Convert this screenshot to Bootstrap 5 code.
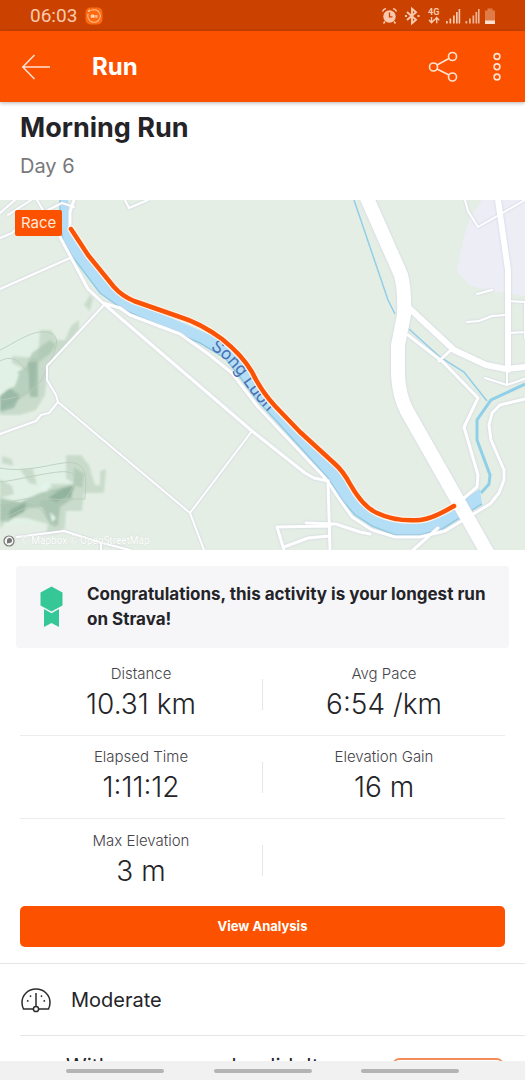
<!DOCTYPE html>
<html lang="en">
<head>
<meta charset="utf-8">
<meta name="viewport" content="width=device-width, initial-scale=1">
<title>Run</title>
<link href="https://cdn.jsdelivr.net/npm/bootstrap@5.3.0/dist/css/bootstrap.min.css" rel="stylesheet">
<script src="https://cdn.jsdelivr.net/npm/bootstrap@5.3.0/dist/js/bootstrap.bundle.min.js" defer></script>
<style>
  body { font-family: Inter, "Liberation Sans", sans-serif; color: #242428; background: #fff; }
  .status-strip { height: 31px; background: #cb4200; color: #f8c9ae; font: 19px/31px Roboto, sans-serif; padding: 0 28px 0 30px; }
  .app-bar { height: 71px; background: #fc5200; color: #fff; padding: 0 18px 0 20px; box-shadow: 0 1px 4px rgba(0,0,0,.3); position: relative; z-index: 1; }
  .app-bar h1 { font-size: 24px; line-height: 32px; margin-left: 40px; }
  .icon-btn { background: none; border: 0; padding: 0; color: #ffe3d3; line-height: 0; }
  .heading-block { padding: 8px 20px 16px; height: 98px; }
  .run-title { font-size: 27px; line-height: 36px; }
  .run-day { font-size: 20px; line-height: 28px; color: #77777c; margin-top: 6px; }
  .map-box svg { display: block; width: 100%; height: auto; }
  .race-tag { top: 10px; left: 15px; background: #fc5200; color: #ffe9dd; font-size: 15px; line-height: 26px; padding: 0 6px; border-radius: 2px; }
  .award { margin: 16px 16px 5px; padding: 16px 12px 16px 24px; background: #f6f6f9; border-radius: 3px; gap: 24px; font-size: 17px; line-height: 25px; font-weight: 700; }
  .award svg { flex: none; }
  .stats { padding: 0 20px; }
  .stat-row { height: 83px; border-bottom: 1px solid #ececef; }
  .stat-row:last-child { border-bottom: 0; }
  .stat-cell { flex: 1 1 0; text-align: center; }
  .stat-rule { width: 1px; height: 31px; background: #e6e6ea; }
  .stat-label { font-size: 15px; line-height: 20px; font-weight: 300; color: #44444a; }
  .stat-value { font-size: 28px; line-height: 40px; font-weight: 300; }
  .btn-run { background: #fc5200; color: #fff; height: 41px; font-size: 13px; font-weight: 700; border-radius: 5px; padding: 0; }
  .btn-run:hover { background: #e34a00; color: #fff; }
  .effort { height: 72px; border-top: 1px solid #e6e6ea; padding: 0 21px; gap: 20px; font-size: 20px; }
  .join-row { margin-left: 20px; padding: 16px 22px 16px 46px; border-top: 1px solid #e6e6ea; font-size: 21px; line-height: 30px; gap: 16px; }
  .btn-join { width: 110px; height: 40px; flex: none; margin-top: 6px; border: 2px solid #f58a5a; border-radius: 6px; color: #fc5200; font-size: 14px; font-weight: 600; padding: 0; }
  .nav-strip { height: 19px; background: #f1f1f1; padding: 0 66px; }
  .nav-strip span { width: 98px; height: 4px; border-radius: 2px; background: #b4b4b4; }
  .ground { fill: #e4eee5; }
  .roads { fill: none; stroke: #fff; stroke-width: 3; stroke-linejoin: round; stroke-linecap: round; filter: drop-shadow(0 0 1px #cdcde0); }
  .minor { stroke-width: 2; }
  .stream { fill: none; stroke: #90cfe8; }
</style>
</head>
<body>
<div class="vh-100 d-flex flex-column overflow-hidden">
  <div class="status-strip d-flex align-items-center flex-shrink-0">
    <span>06:03</span>
    <svg class="ms-2" width="18" height="18" viewBox="0 0 18 18" aria-hidden="true"><rect x="0.5" y="0.5" width="17" height="17" rx="5" fill="#ff6a10"/><circle cx="9" cy="9" r="6.3" fill="none" stroke="#ffc09b" stroke-dasharray="34 5" transform="rotate(-115 9 9)"/><path d="M6.3 10.8V8h2.2v2.8M7.4 8.5v2.3M10 8v2.8M11.8 8v2.8" stroke="#ffe0cc" stroke-width="1" fill="none"/><path d="M3.2 4.5l2-1.5" stroke="#ffe0cc" stroke-width="1.5"/></svg>
    <svg class="ms-auto" width="116" height="18" viewBox="0 0 116 18" fill="#f8c9ae" aria-hidden="true">
      <circle cx="8.500" cy="9.500" r="6.200"/><path d="M1.500 4.500Q2.500 2 5 1.500M12 1.500Q14.500 2 15.500 4.500M4 14.500L2.500 16.500M13 14.500l1.500 2" stroke="#f8c9ae" stroke-width="1.600" fill="none"/><path d="M8.500 5.500V9.800H11.500" stroke="#cb4200" stroke-width="1.300" fill="none"/>
      <path d="M26 5l9 7.800L31 16.300V1.700L35 5.200L26 13" fill="none" stroke="#f8c9ae" stroke-width="1.900"/><path d="M24 9h2M36.500 9h2" stroke="#f8c9ae" stroke-width="1.800"/>
      <text x="47" y="8" font-family="Roboto, sans-serif" font-size="9" font-weight="700">4G</text>
      <path d="M50.500 10v5.500M48 13l2.500 2.700L53 13M55.700 16.300v-5.500M53.200 13.200l2.500-2.700 2.500 2.700" fill="none" stroke="#f8c9ae" stroke-width="1.400"/>
      <path d="M65 14h1.700v2.500H65zM68.500 11.500h1.700v5h-1.700zM72 8.500h1.700v8H72zM75 5h1.700v11.500H75zM77.600 2h1.600v14.500h-1.600z"/>
      <path opacity=".85" d="M84.500 14h1.700v2.500h-1.700zM88 11.500h1.700v5H88zM91.500 8.500h1.700v8h-1.700zM94.500 5h1.700v11.500h-1.700zM97 2h1.600v14.500H97z"/>
      <path d="M104 3.500h2.500V1.500h5v2h2.500V17h-10z" fill="#e07a47"/><path d="M104 13.500h10V17h-10z" fill="#ffe0cf"/>
    </svg>
  </div>

  <header class="app-bar d-flex align-items-center flex-shrink-0">
    <button class="icon-btn" type="button" aria-label="Back"><svg width="32" height="32" viewBox="0 0 32 32" fill="none" stroke="currentColor" stroke-width="1.500"><path d="M30 16H3M14.500 4L2.800 16l11.700 12"/></svg></button>
    <h1 class="fw-bold mb-0">Run</h1>
    <button class="icon-btn ms-auto" type="button" aria-label="Share"><svg width="32" height="32" viewBox="0 0 32 32" fill="none" stroke="currentColor" stroke-width="1.600"><circle cx="6.500" cy="16" r="4"/><circle cx="25.500" cy="5.500" r="4"/><circle cx="25.500" cy="26" r="4"/><path d="M10 14l12-6.500M10 18l12 6"/></svg></button>
    <button class="icon-btn ms-4 ps-1" type="button" aria-label="More options"><svg width="20" height="32" viewBox="0 0 20 32" fill="none" stroke="currentColor" stroke-width="1.600"><circle cx="10" cy="5.500" r="2.900"/><circle cx="10" cy="15.800" r="2.900"/><circle cx="10" cy="26" r="2.900"/></svg></button>
  </header>

  <main class="flex-grow-1 overflow-hidden">
    <div class="heading-block">
      <h2 class="run-title fw-bold mb-0">Morning Run</h2>
      <p class="run-day mb-0">Day 6</p>
    </div>

    <div class="map-box position-relative">
      <svg viewBox="0 200 525 350" role="img" aria-label="Route along Song Luon">
        <defs><filter id="soft" x="-5%" y="-5%" width="110%" height="110%"><feGaussianBlur stdDeviation="1"/></filter>
        <path id="riverName" d="M210 349C230 360 240 378 252 394C260 404 268 412 280 424"/></defs>
        <rect class="ground" y="200" width="525" height="350"/>
        <path d="M482 200L470 218L463 240L457 271L469 285L490 291L525 296V200z" fill="#ededf6"/>

        <!-- hills -->
        <g filter="url(#soft)">
          <path d="M0 345L20 335L50 330L55 350L44 375L30 390L0 405z" fill="#e2f1e6"/>
          <path d="M84 305l6-10 3 3-3 13zM40 330h11l6 10h8l6-14 8-6v9L64 348 48 366 45 395 36 410 20 415H0v-9l28-12 2-22-18-9v-7l26 2z" fill="#c9dccb"/>
          <path d="M50 340l6 5-6 9-14 10-2 22-6 8-28 16v-30l12-5 14-8 6-14z" fill="#a9c5b0" opacity=".75"/>
          <path d="M0 392l10-4 10 8-6 12-14 4z" fill="#8fb09c" opacity=".7"/>
          <path d="M28 362h10v35h-8z" fill="#8fb09c" opacity=".6"/>
          <path d="M0 364l12 3 7 7-4 12-8 4-7 6z" fill="#e2f1e6"/>
          <path d="M0 466l40-2 30-7 10 10 4 35-22 20-60 4z" fill="#e2f1e6"/>
          <path d="M66 455h15l8 10 6 20h5v-14l6-2-2 24H84l-2 18H66l-1 17-8 5H46l2-9-22-6H4v6l-4 5v-50l12 7 2 8-14 4v6l18-2 20 5 4-7h25v-8H48v-8h26l-8-6zM2 456l10 3 1 7-11-3zM20 469h13l4 16-8-2z" fill="#c9dccb"/>
          <path d="M74 467l10 7-2 14-8-3z" fill="#a9c5b0" opacity=".7"/>
          <path d="M0 498l20 4 20-9 32-8v14l-12 8-2 19-8-2-8-17-14 1-20 14-8-1v-12z" fill="#9fbea8" opacity=".75"/>
          <path d="M48 498l14-9 13-4-4 11-15 6zM10 510l16-8-2 10-15 6z" fill="#86aa94" opacity=".7"/>
          <path d="M50 512l6 6-4 4zM40 486l8-4 4 5-10 3z" fill="#e2f5ec"/>
        </g>
        <path d="M0 350C20 340 35 328 50 333S50 360 44 375S20 398 0 400M0 361c14-8 25 4 28 16M0 468C30 474 60 460 74 463S86 480 85 499H62c-3 8-3 20-7 28C46 522 44 507 34 506S12 518 0 517M0 482c25-3 55-12 68-10s5 16-2 26M0 505c20-6 30-9 62-5" fill="none" stroke="#b7c9ba" stroke-width=".8"/>

        <!-- river and streams -->
        <path class="stream" stroke-width="1.500" d="M354 200L388 300L395 314M409 329L440 357L464 372L487 401"/>
        <path class="stream" stroke-width="3" d="M525 384L491 400L477 420V440L490 475L489 484L481 493"/>
        <path d="M60 200V222L63 240L72 256L100 293L124 310L160 326L200 343L225 358L240 377L257 400L280 425L328 478L342 500L355 515L372 526L395 535H420L442 529L482 504L480 489L453 505L430 515L405 521L378 513L358 495L340 470L300 432L265 396L250 370L232 348L210 335L190 326L145 307L127 298L110 283L86 252L70 224L68 200z" fill="#b4def6"/>
        <path d="M60 200V222L63 240L72 256L100 293L124 310L160 326L200 343L225 358L240 377L257 400L280 425L328 478L342 500L355 515L372 526L395 535H420L442 529L482 504" fill="none" stroke="#8fcbe3" stroke-width="1.500"/>

        <!-- roads -->
        <g class="roads">
          <g class="minor">
            <path d="M0 238l12-5 15-14M0 213l15-13M8 215l23-15M37 200l7 12 18-9 12 4M125 200l4 8 19-8M0 289l70-31M104 305L47 366v14l9 15 2 7M58 402L190 513L252 431M190 513l14 37M0 434l36-13 5-6 8-2 9-11"/>
            <path d="M17 537l47-6 38 12 28 7M101 543v7M525 200l-47 27-10-16-3-11M492 290l-15 4M506 315l-14 1-13 5-12 1M508 301l17 1 0 36M509 333l16-1M485 378l22 7 20-7M507 370v15"/>
          </g>
          <path d="M74 200l-4 12v18M60 237l28 52 15 14L252 431l53 42 9 5 14 3M103 303l17 5 10 7 50 19L207 353L232 373L258 407L326 479L340 500L352 517L372 530L395 537H420L445 531L490 504L499 493L504 480V470L491 440L489 425L492 413L500 405L525 399"/>
          <path d="M328 481l2 69M306 523l30 1 24 8 10 2M330 526l-53 1 7 23M284 547l24-9 21-2M413 550l25-22M408 335l35 27 35 36-14 29 14 48-1 12-13 11M439 361l13-12"/>
          <path stroke-width="6" d="M498 200l10 70v100M409 308l45 42 32 15 20 4 19-2"/>
          <path stroke-width="14" stroke-linejoin="bevel" stroke-linecap="butt" d="M366 196L401 275Q405 290 404 315L398 345V375Q399 396 407 411L488 554"/>
        </g>
        <text font-family="Inter, sans-serif" font-size="17" fill="#4a6fb3"><textPath href="#riverName">Song Luon</textPath></text>

        <!-- route -->
        <g fill="none" stroke-linecap="round" stroke-linejoin="round">
          <path stroke="#fff5ec" stroke-width="7" d="M71 229L88 255L114 287Q122 296 134 301L180 317Q200 323 222 339Q242 355 252 372Q261 391 275 406L300 432L335 464Q343 471 350 484Q363 507 377 513Q396 522 420 520Q432 519 454 506"/>
          <path stroke="#fb5306" stroke-width="4.500" d="M71 229L88 255L114 287Q122 296 134 301L180 317Q200 323 222 339Q242 355 252 372Q261 391 275 406L300 432L335 464Q343 471 350 484Q363 507 377 513Q396 522 420 520Q432 519 454 506"/>
        </g>
        <circle cx="9" cy="541" r="5" fill="#f5f8f5" stroke="#777" stroke-width="1.200"/><path d="M7 543.500v-3a2.500 2.500 0 1 1 2.500 2.500z" fill="#777"/>
        <text x="21" y="544" font-family="Roboto, sans-serif" font-size="10" fill="#fff" stroke="#cdd6ce" stroke-width=".4" paint-order="stroke">© Mapbox © OpenStreetMap</text>
      </svg>
      <span class="race-tag position-absolute">Race</span>
    </div>

    <section class="award d-flex align-items-center">
      <svg width="23" height="42" viewBox="0 0 23 42" fill="#36c796" aria-hidden="true"><path d="M11.500 0.500L22.500 6.500V19.500L11.500 25.500L0.500 19.500V6.500z"/><path d="M4 23l7.500 4.200L19 23v18l-7.500-4L4 41z"/></svg>
      <div>Congratulations, this activity is your longest run on Strava!</div>
    </section>

    <section class="stats">
      <div class="stat-row d-flex align-items-center">
        <div class="stat-cell"><div class="stat-label">Distance</div><div class="stat-value">10.31 km</div></div>
        <div class="stat-rule"></div>
        <div class="stat-cell"><div class="stat-label">Avg Pace</div><div class="stat-value">6:54 /km</div></div>
      </div>
      <div class="stat-row d-flex align-items-center">
        <div class="stat-cell"><div class="stat-label">Elapsed Time</div><div class="stat-value">1:11:12</div></div>
        <div class="stat-rule"></div>
        <div class="stat-cell"><div class="stat-label">Elevation Gain</div><div class="stat-value">16 m</div></div>
      </div>
      <div class="stat-row d-flex align-items-center">
        <div class="stat-cell"><div class="stat-label">Max Elevation</div><div class="stat-value">3 m</div></div>
        <div class="stat-rule"></div>
        <div class="stat-cell"></div>
      </div>
    </section>

    <div class="px-3 mx-1 pb-3 pt-1"><button class="btn btn-run w-100" type="button">View Analysis</button></div>

    <div class="effort d-flex align-items-center">
      <svg width="30" height="26" viewBox="0 0 30 26" fill="none" stroke="#2c2c30" stroke-width="1.500" aria-hidden="true"><path d="M12 22H2.500Q1 19 1 15.500C1 8 7 2 15 2s14 6 14 13.500Q29 19 27.500 22H18"/><path d="M15 6v13"/><circle cx="15" cy="22" r="2.600"/><path d="M6 13.500l1.500.8M9 8.500l1 1.300M21 8.500l-1 1.300M24 13.500l-1.500.8"/></svg>
      <span>Moderate</span>
    </div>
    <div class="join-row d-flex justify-content-between align-items-start">
      <span>With someone who didn't record?</span>
      <button class="btn btn-join" type="button">Add Others</button>
    </div>
  </main>

  <div class="nav-strip d-flex align-items-center justify-content-between flex-shrink-0"><span></span><span></span><span></span></div>
</div>
</body>
</html>
